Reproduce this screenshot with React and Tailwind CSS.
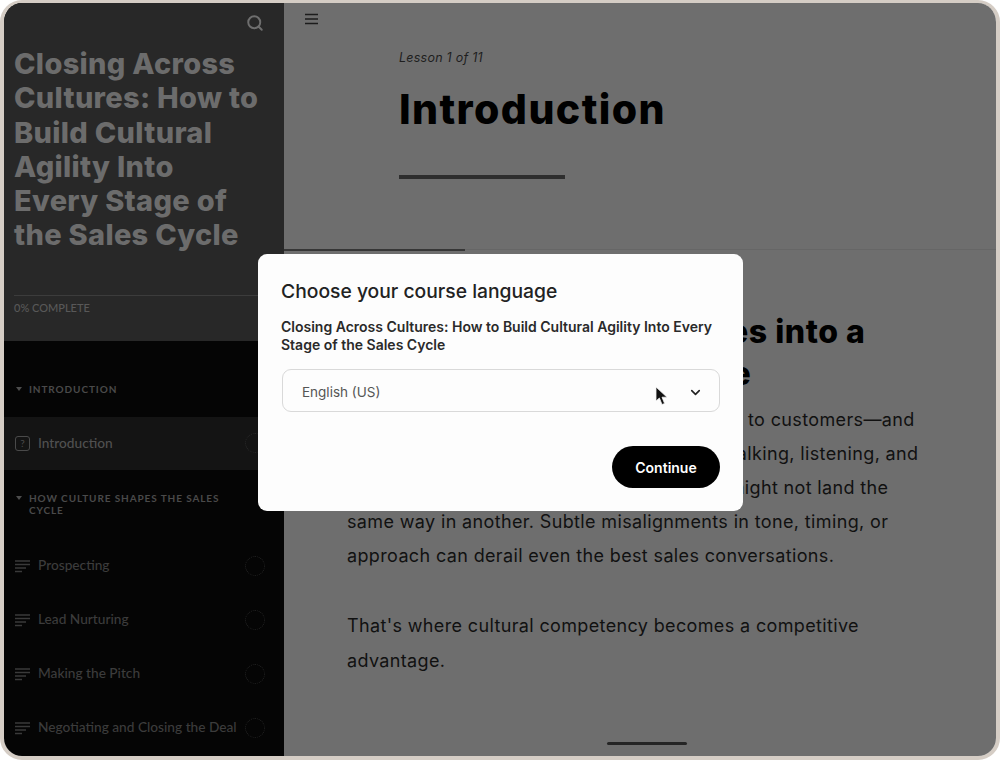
import { ChevronDown, Search } from "lucide-react";

const sans = "font-['Inter','Noto_Sans',sans-serif]";
const lato = "font-['Lato','Noto_Sans',sans-serif]";

const lessons = ["Prospecting", "Lead Nurturing", "Making the Pitch", "Negotiating and Closing the Deal"];

function TextLinesIcon() {
  return (
    <svg width="16" height="14" viewBox="0 0 16 14" className="shrink-0 text-[#3a3a3a]" fill="none" stroke="currentColor" strokeWidth="1.3">
      <path d="M0 2h15M0 5.5h15M0 9h11M0 12.5h7" />
    </svg>
  );
}

function QuizIcon() {
  return (
    <span className="flex h-[15px] w-[15px] shrink-0 items-center justify-center rounded-[3px] border border-[#4a4a4a] text-[10px] leading-none text-[#4a4a4a]">
      ?
    </span>
  );
}

function SectionTitle({ children }) {
  return (
    <div className="flex items-start pl-[12px] pr-[50px]">
      <span className="mt-[4px] h-0 w-0 shrink-0 border-x-[3.5px] border-t-[4px] border-x-transparent border-t-[#4d4d4d]" />
      <span className="ml-[7px] text-[10px] leading-[12.5px] font-bold tracking-[0.9px] text-[#4a4a4a] uppercase">{children}</span>
    </div>
  );
}

function LessonRow({ title }) {
  return (
    <div className="flex h-[54px] items-center pl-[11px] pr-[19px]">
      <TextLinesIcon />
      <span className="ml-[7px] flex-1 text-[13.7px] font-medium whitespace-nowrap text-[#3c3c3c]">{title}</span>
      <span className="h-[20px] w-[20px] shrink-0 rounded-full border border-dotted border-[#242424]" />
    </div>
  );
}

function Sidebar() {
  return (
    <aside className={`flex w-[280px] shrink-0 flex-col bg-[#050505] ${lato}`}>
      <div className="h-[338px] bg-[#282828] pl-[10px]">
        <div className="flex h-[44px] items-start justify-end pt-[11px] pr-[20px]">
          <Search size={18} strokeWidth={2.6} className="text-[#6e6e6e]" />
        </div>
        <h2 className={`w-[250px] text-[29px] leading-[34.3px] font-extrabold tracking-[0.3px] text-[#6c6c6c] ${sans}`}>
          Closing Across Cultures: How to Build Cultural Agility Into Every Stage of the Sales Cycle
        </h2>
        <div className="mt-[42px] mr-[26px] h-px bg-[#3c3c3c]" />
        <p className="mt-[4px] text-[11px] font-medium text-[#585858]">0% COMPLETE</p>
      </div>
      <div className="pt-[42px]">
        <SectionTitle>Introduction</SectionTitle>
        <div className="mt-[21px] flex h-[53px] items-center bg-[#141414] pl-[11px] pr-[19px]">
          <QuizIcon />
          <span className="ml-[8px] flex-1 text-[13.7px] font-medium text-[#505050]">Introduction</span>
          <span className="h-[20px] w-[20px] shrink-0 rounded-full border border-dotted border-[#2a2a2a]" />
        </div>
        <div className="mt-[22px] mb-[22px]">
          <SectionTitle>How culture shapes the sales cycle</SectionTitle>
        </div>
        {lessons.map((title) => (
          <LessonRow key={title} title={title} />
        ))}
      </div>
    </aside>
  );
}

function Lesson() {
  return (
    <main className={`relative flex flex-1 flex-col bg-[#6e6e6e] ${sans}`}>
      <div className="flex h-[45px] pt-[10px] pl-[21px]">
        <svg width="13" height="12" viewBox="0 0 13 12" stroke="#1c1c1c" strokeWidth="1.5" fill="none">
          <path d="M0 1.5h13M0 6h13M0 10.5h13" />
        </svg>
      </div>
      <div className="pl-[115px]">
        <p className="text-[12.5px] leading-[20px] tracking-[0.25px] text-[#1e1e1e] italic">Lesson 1 of 11</p>
        <h1 className="mt-[15px] text-[41px] leading-[52px] font-extrabold tracking-[1.4px] text-black">Introduction</h1>
        <div className="mt-[40px] h-[4px] w-[166px] bg-[#2e2e2e]" />
      </div>
      <div className="mt-[70px] h-px bg-[#666666]">
        <div className="h-[2px] w-[181px] bg-[#363636]" />
      </div>
      <div className="pt-[61px] pl-[63px] whitespace-nowrap text-[#111111]">
        <h2 className="text-[32px] leading-[42px] font-extrabold tracking-[0.55px] text-black">
          <span className="block">Turning Local Differences into a</span>
          <span className="block">Lasting Sales Advantage</span>
        </h2>
        <div className="mt-[8px] text-[18px] leading-[34.1px] tracking-[0.36px]">
          <p>Selling abroad isn't about adapting your deal to customers—and</p>
          <p>it's about how people in a culture go about talking, listening, and</p>
          <p>deciding. What works nicely in one culture might not land the</p>
          <p>same way in another. Subtle misalignments in tone, timing, or</p>
          <p>approach can derail even the best sales conversations.</p>
          <p className="mt-[36px]">That's where cultural competency becomes a competitive</p>
          <p>advantage.</p>
        </div>
      </div>
      <div className="absolute bottom-[11px] left-[323px] h-[3px] w-[80px] rounded-full bg-[#252525]" />
    </main>
  );
}

function LanguageModal() {
  return (
    <div className={`absolute top-[251px] left-[254px] h-[257px] w-[485px] rounded-[9px] bg-[#fdfdfd] px-[23px] pt-[24px] ${sans}`}>
      <h3 className="text-[19.3px] leading-[26px] font-medium text-[#222222]">Choose your course language</h3>
      <p className="mt-[14px] text-[14px] leading-[18px] font-semibold tracking-[0px] text-[#2a2a2a]">
        Closing Across Cultures: How to Build Cultural Agility Into Every Stage of the Sales Cycle
      </p>
      <div className="relative mt-[15px] ml-px flex h-[43px] w-[438px] items-center justify-between rounded-[9px] border border-[#d9d9d9] pt-[4px] pr-[16px] pl-[19px]">
        <span className="text-[13.5px] text-[#555555]">English (US)</span>
        <ChevronDown size={15} strokeWidth={2.6} className="text-[#222222]" />
        <svg width="13" height="21" viewBox="0 0 13 21" className="absolute top-[16px] left-[372px]">
          <path d="M1 1v14l3.4-3 2.6 6.5 2.6-1-2.6-6.3H12z" fill="#111111" stroke="#f2f2f2" strokeWidth="0.8" />
        </svg>
      </div>
      <div className="mt-[34px] ml-px flex w-[438px] justify-end">
        <button className="h-[42px] w-[108px] rounded-full bg-black text-[14px] font-semibold text-white">Continue</button>
      </div>
    </div>
  );
}

export default function App() {
  return (
    <div className="h-[760px] w-[1000px] bg-white">
      <div className="relative flex h-[760px] w-[1000px] overflow-hidden rounded-[22px] border-x-[4px] border-t-[3px] border-b-[4px] border-[#d5cdc5]">
        <Sidebar />
        <Lesson />
        <LanguageModal />
      </div>
    </div>
  );
}
